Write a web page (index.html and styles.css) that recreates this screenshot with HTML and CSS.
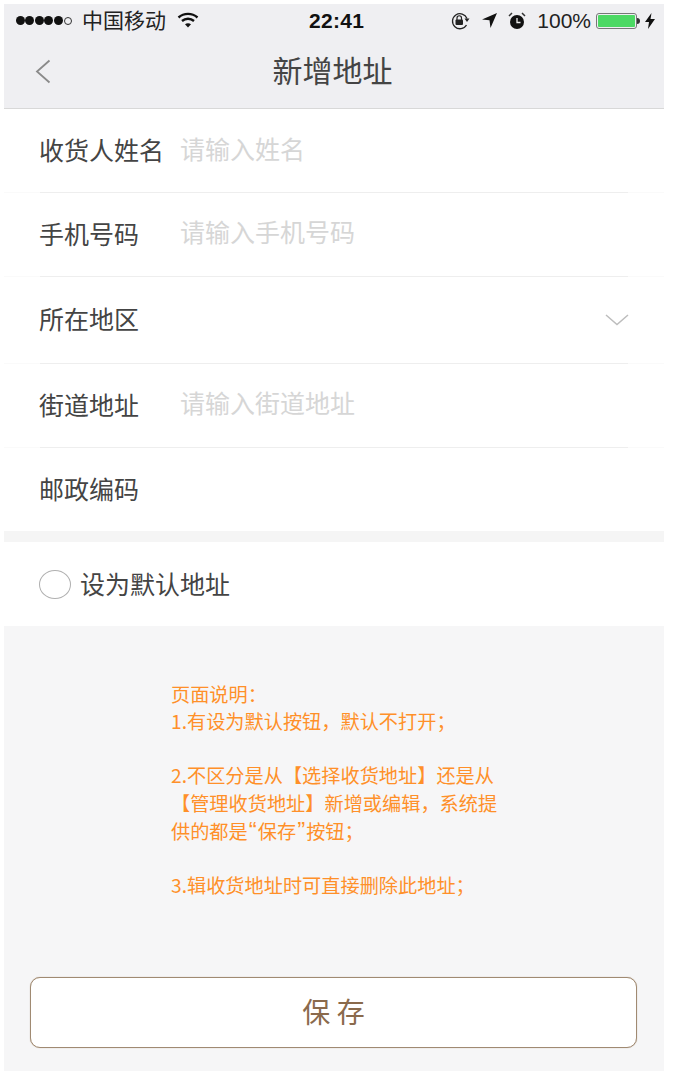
FILE: index.html
```html
<!DOCTYPE html>
<html lang="zh-CN">
<head>
<meta charset="utf-8">
<title>新增地址</title>
<link rel="stylesheet" href="styles.css">
</head>
<body>
<div class="phone">
  <header class="top">
    <div class="status">
      <div class="status-left">
        <span class="signal"><i></i><i></i><i></i><i></i><i></i><i class="off"></i></span>
        <span class="carrier">中国移动</span>
        <svg class="wifi" width="22" height="16" viewBox="0 0 22 16"><path d="M1.500 5.500C7 .7 15 .7 20.500 5.500" fill="none" stroke="#111" stroke-width="2.400"/><path d="M5 9c3.500-3 8.500-3 12 0" fill="none" stroke="#111" stroke-width="2.400"/><path d="M8 12.200c1.800-1.400 4.200-1.400 6 0L11 15.500z" fill="#111"/></svg>
      </div>
      <div class="time">22:41</div>
      <div class="status-right">
        <svg class="lock" width="21" height="18" viewBox="0 0 21 18"><path d="M17 6.500A7.500 7.500 0 1 0 16.500 13" fill="none" stroke="#222" stroke-width="1.300"/><path d="M14.500 6.500h5L17 10z" fill="#222"/><rect x="5.500" y="7.500" width="7.500" height="5.500" rx="1" fill="#222"/><path d="M7 8V6a2.200 2.200 0 0 1 4.500 0v2" fill="none" stroke="#222" stroke-width="1.200"/></svg>
        <svg class="arrow" width="17" height="17" viewBox="0 0 17 17"><path d="M16 1 1 7.500l7.500.8L9.500 16z" fill="#111"/></svg>
        <svg class="alarm" width="18" height="18" viewBox="0 0 18 18"><circle cx="9" cy="10" r="7" fill="#111"/><path d="M9 6v4.500h3.500" fill="none" stroke="#eee" stroke-width="1.300"/><path d="M1 4 4 1M17 4l-3-3" stroke="#333" stroke-width="1.500"/></svg>
        <span class="percent">100%</span>
        <span class="battery"><span class="level"></span></span><span class="nub"></span>
        <svg class="bolt" width="10" height="16" viewBox="0 0 10 16"><path d="M6.500 0 0 9h4l-1 7 7-10H5.500z" fill="#111"/></svg>
      </div>
    </div>
    <div class="nav">
      <svg class="back" width="16" height="25" viewBox="0 0 16 25"><path d="M14.500 1.500 2 12.500l12.500 11" fill="none" stroke="#8a8a8a" stroke-width="1.800"/></svg>
      <h1 class="title">新增地址</h1>
    </div>
  </header>

  <main class="form">
    <div class="row row-a"><span class="label">收货人姓名</span><span class="hint hint-a">请输入姓名</span></div>
    <div class="sep"><div class="sep-in"></div></div>
    <div class="row row-a"><span class="label">手机号码</span><span class="hint hint-b">请输入手机号码</span></div>
    <div class="sep"><div class="sep-in"></div></div>
    <div class="row row-tall"><span class="label">所在地区</span>
      <svg class="chev" width="24" height="12" viewBox="0 0 24 12"><path d="M1 1l11 9.500L23 1" fill="none" stroke="#bdbdbd" stroke-width="1.500"/></svg>
    </div>
    <div class="sep"><div class="sep-in"></div></div>
    <div class="row row-a"><span class="label">街道地址</span><span class="hint hint-b">请输入街道地址</span></div>
    <div class="sep"><div class="sep-in"></div></div>
    <div class="row row-a"><span class="label">邮政编码</span></div>
  </main>

  <div class="band"></div>

  <div class="default-row">
    <span class="radio"></span>
    <span class="default-text">设为默认地址</span>
  </div>

  <section class="notes">
    <div class="note">
      <p>页面说明：</p>
      <p>1.有设为默认按钮，默认不打开；</p>
      <p class="gap">2.不区分是从【选择收货地址】还是从</p>
      <p>【管理收货地址】新增或编辑，系统提</p>
      <p>供的都是<span class="quote">“</span>保存<span class="quote">”</span>按钮；</p>
      <p class="gap">3.辑收货地址时可直接删除此地址；</p>
    </div>
    <button class="save" type="button">保 存</button>
  </section>
</div>
</body>
</html>
```

FILE: styles.css
```css
* { box-sizing: border-box; }
html, body { margin: 0; padding: 0; background: #fff; }
body { font-family: "Noto Sans CJK SC", "Liberation Sans", sans-serif; }
.phone { width: 660px; height: 1067px; margin: 4px 0 0 4px; display: flex; flex-direction: column; background: #fff; }

.top { height: 105px; flex: none; background: #efeff2; border-bottom: 1px solid #d8d8d8; }
.status { height: 33px; display: flex; align-items: center; justify-content: space-between; position: relative; padding: 0 9px 0 12px; color: #111; }
.status-left, .status-right { display: flex; align-items: center; }
.signal { display: flex; align-items: center; gap: 0; width: 66px; }
.signal i { width: 9px; height: 9px; margin-right: .4px; border-radius: 50%; background: #111; }
.signal i.off { width: 8px; height: 8px; margin-left: 1px; background: none; border: 1px solid #333; }
.carrier { font-size: 21px; line-height: 30px; color: #222; margin-bottom: 3px; }
.wifi { margin-left: 11px; margin-bottom: 1px; }
.time { position: absolute; left: 305px; top: 0; font: 700 21px/33px "Liberation Sans", sans-serif; color: #111; letter-spacing: .3px; }
.lock { margin-right: 10px; }
.arrow { margin-right: 10px; }
.alarm { margin-right: 11px; }
.percent { font: 21px/33px "Liberation Sans", sans-serif; color: #222; margin-right: 5px; }
.battery { width: 41px; height: 16px; border: 1px solid #777; border-radius: 3px; padding: 1px; display: block; }
.level { display: block; height: 100%; background: #4cd964; border-radius: 1px; }
.nub { width: 3px; height: 6px; background: #333; border-radius: 0 3px 3px 0; margin-right: 5px; }

.nav { height: 71px; display: flex; align-items: center; justify-content: center; position: relative; }
.back { position: absolute; left: 31px; top: 22px; }
.title { margin: 0 3px 7px 0; font-size: 30px; line-height: 40px; font-weight: 400; color: #444; }

.form { flex: none; }
.row { display: flex; align-items: center; padding: 0 36px 0 35px; }
.row-a { height: 83px; }
.row-tall { height: 86px; justify-content: space-between; padding-right: 35px; }
.label { width: 141px; flex: none; font-size: 25px; line-height: 34px; color: #444; white-space: nowrap; margin-bottom: 4px; }
.hint { font-size: 25px; line-height: 34px; color: #d6d6d6; white-space: nowrap; }
.hint-a { margin-bottom: 6px; }
.hint-b { margin-bottom: 8px; }
.chev { flex: none; }
.sep { height: 1px; background: #fafafa; padding-left: 36px; }
.sep-in { width: 588px; height: 1px; background: #eeeeee; }

.band { height: 11px; flex: none; background: #f5f5f5; }

.default-row { height: 84px; flex: none; display: flex; align-items: center; padding-left: 35px; }
.radio { width: 32px; height: 29px; border: 1px solid #b0b0b0; border-radius: 50%; flex: none; margin-right: 9px; }
.default-text { font-size: 25px; line-height: 34px; color: #444; margin-bottom: 2px; }

.notes { flex: 1; background: #f6f6f7; display: flex; flex-direction: column; }
.note { margin: 55px 0 0 167px; color: #ff9029; font-size: 19.200px; line-height: 27.200px; }
.note p { margin: 0; white-space: nowrap; }
.note p.gap { margin-top: 27px; }
.quote { font-family: "Liberation Sans", sans-serif; font-size: 24px; margin: 0 1px; }
.save { display: block; width: 607px; height: 71px; margin: auto 0 23px 26px; background: #fff; border: 1px solid #a08a72; box-shadow: 0 0 1px #b9a48e; border-radius: 10px; color: #8a6a4c; font: 400 28px/38px "Noto Sans CJK SC", sans-serif; padding: 0 0 3px; }
```
